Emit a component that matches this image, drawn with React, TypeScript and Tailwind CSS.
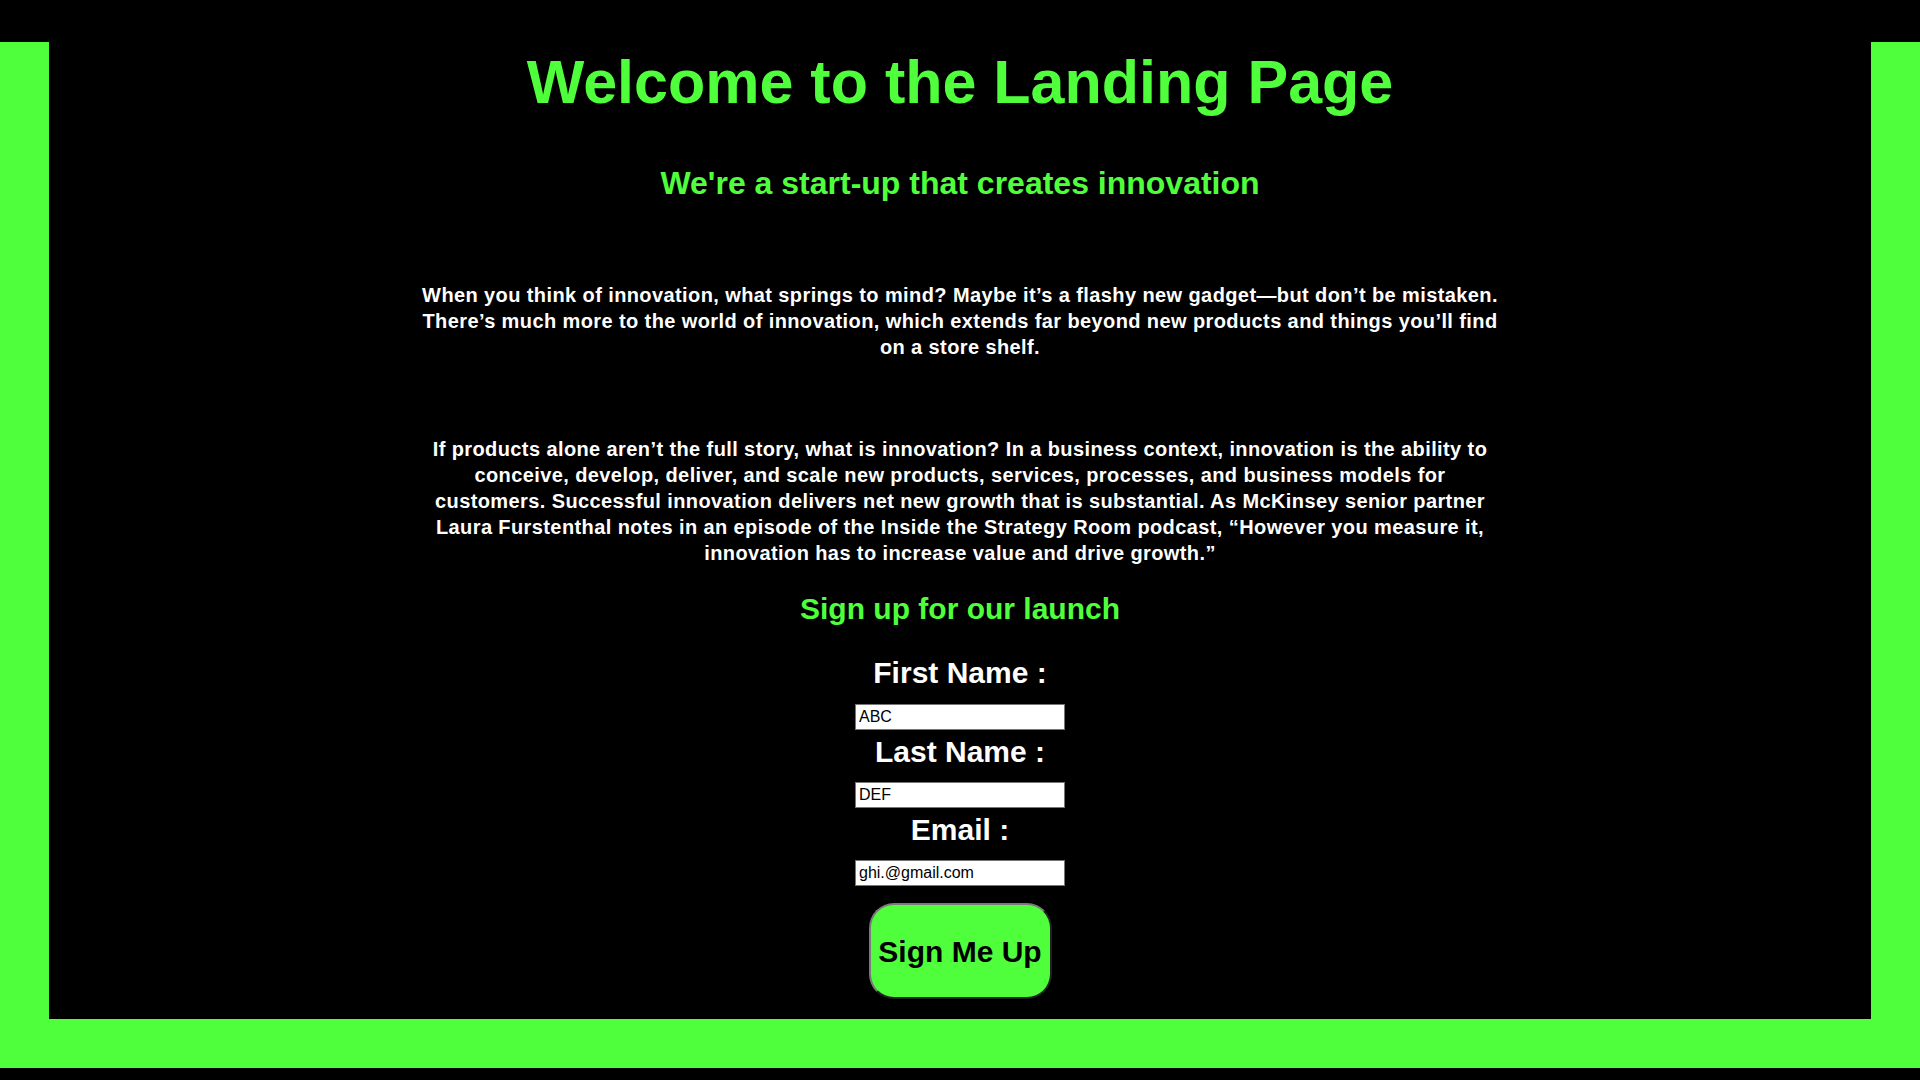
export default function App() {
  return (
    <div className="h-[1080px] bg-black pt-[42px] font-['Liberation_Sans',Arial,sans-serif]">
      <div className="flex h-[1026px] flex-col items-center border-x-[49px] border-b-[49px] border-[#50ff3c] bg-black">
        <h1 className="mt-[10px] text-[61px] leading-[61px] font-bold text-[#50ff3c]">
          Welcome to the Landing Page
        </h1>
        <h2 className="mt-[55px] text-[32px] leading-[30px] font-bold text-[#50ff3c]">
          We're a start-up that creates innovation
        </h2>

        <p className="mt-[84px] w-[60%] text-center text-[20px] leading-[26px] font-bold tracking-[0.4px] text-white">
          When you think of innovation, what springs to mind? Maybe it’s a flashy new gadget—but don’t be mistaken.
          <br />
          There’s much more to the world of innovation, which extends far beyond new products and things you’ll find
          <br />
          on a store shelf.
        </p>
        <p className="mt-[76px] w-[60%] text-center text-[20px] leading-[26px] font-bold tracking-[0.4px] text-white">
          If products alone aren’t the full story, what is innovation? In a business context, innovation is the ability to
          <br />
          conceive, develop, deliver, and scale new products, services, processes, and business models for
          <br />
          customers. Successful innovation delivers net new growth that is substantial. As McKinsey senior partner
          <br />
          Laura Furstenthal notes in an episode of the Inside the Strategy Room podcast, “However you measure it,
          <br />
          innovation has to increase value and drive growth.”
        </p>

        <h3 className="mt-[28px] text-[30px] leading-[30px] font-bold text-[#50ff3c]">Sign up for our launch</h3>

        <form className="flex flex-col items-center">
          <label htmlFor="first" className="mt-[35px] text-[30px] leading-[27px] font-bold text-white">
            First Name :
          </label>
          <input
            id="first"
            type="text"
            defaultValue="ABC"
            className="mt-[18px] h-[26px] w-[210px] border border-[#767676] bg-white px-[3px] text-[16px] text-black"
          />
          <label htmlFor="last" className="mt-[8px] text-[30px] leading-[27px] font-bold text-white">
            Last Name :
          </label>
          <input
            id="last"
            type="text"
            defaultValue="DEF"
            className="mt-[17px] h-[26px] w-[210px] border border-[#767676] bg-white px-[3px] text-[16px] text-black"
          />
          <label htmlFor="email" className="mt-[8px] text-[30px] leading-[27px] font-bold text-white">
            Email :
          </label>
          <input
            id="email"
            type="email"
            defaultValue="ghi.@gmail.com"
            className="mt-[17px] h-[26px] w-[210px] border border-[#767676] bg-white px-[3px] text-[16px] text-black"
          />
          <button
            type="button"
            className="mt-[17px] h-[96px] w-[183px] rounded-[25px] border-2 border-t-[#7a7a7a] border-l-[#7a7a7a] border-r-[#222] border-b-[#222] bg-[#50ff3c] text-[30px] font-bold text-black"
          >
            Sign Me Up
          </button>
        </form>
      </div>
    </div>
  );
}
